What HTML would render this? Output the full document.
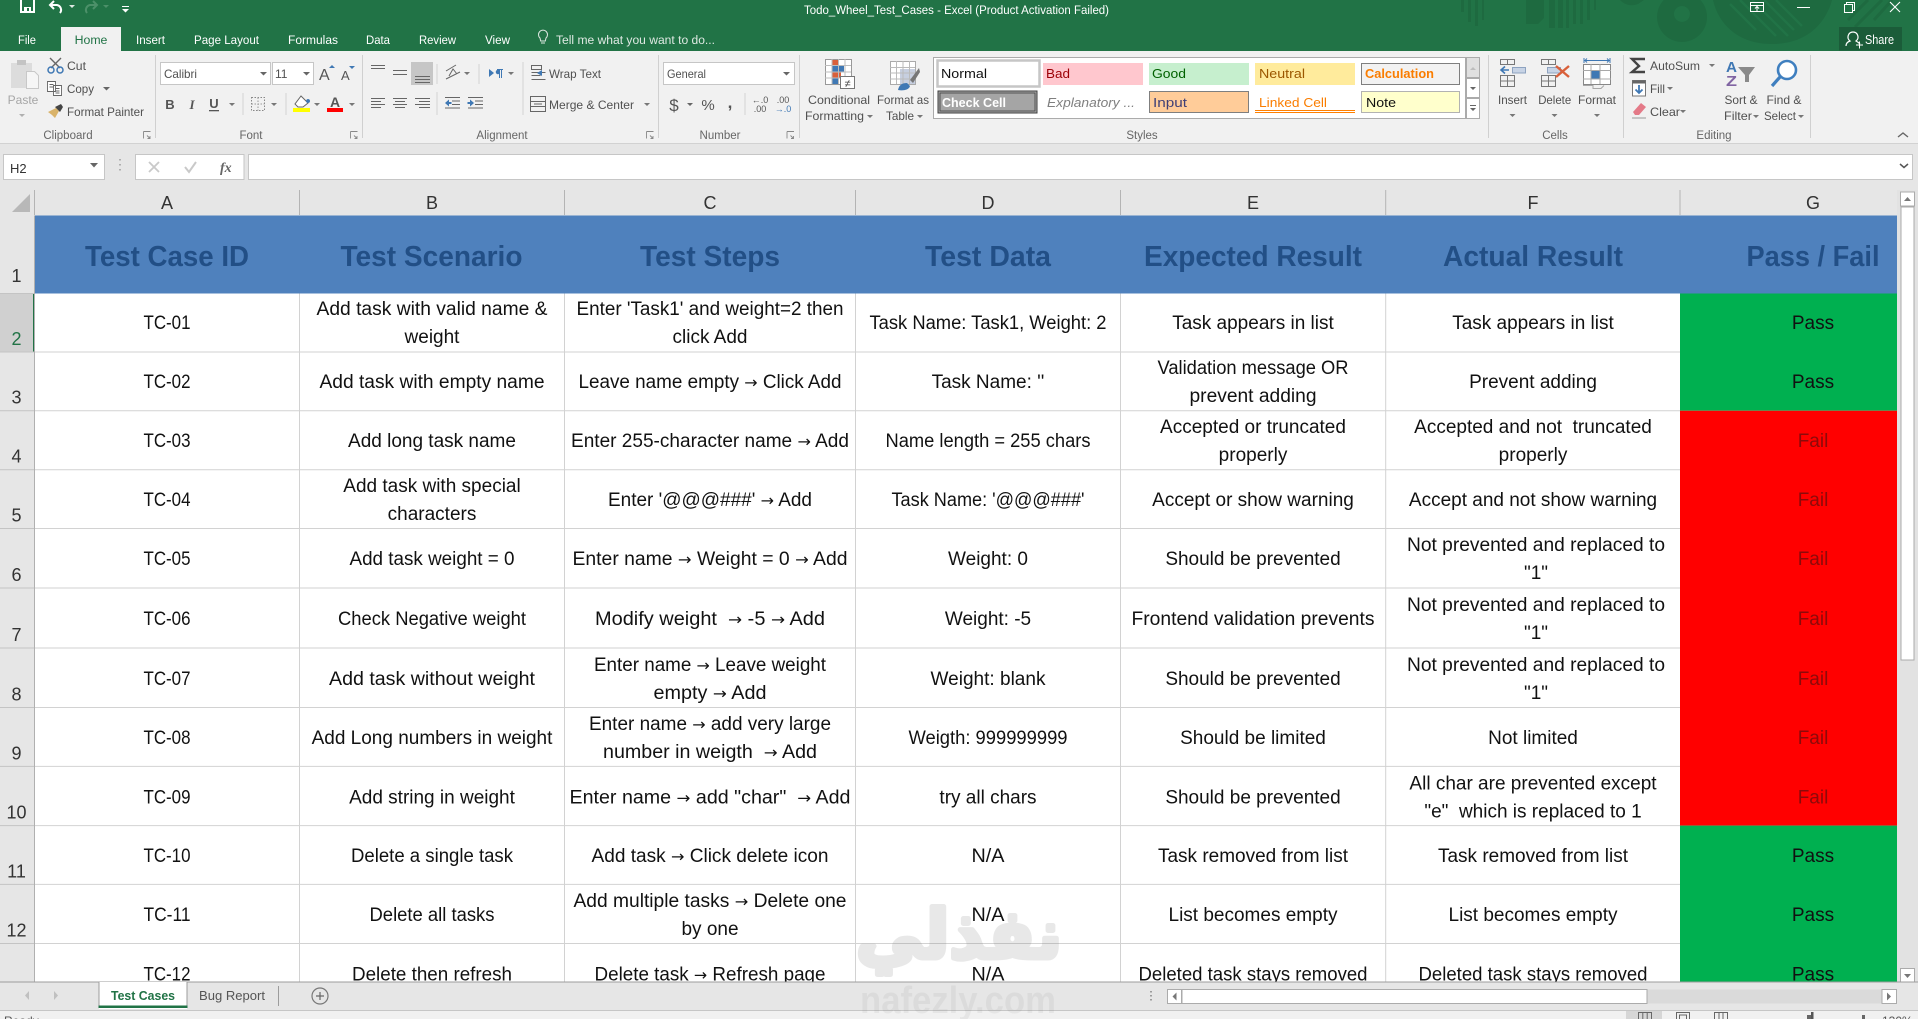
<!DOCTYPE html>
<html lang="en"><head><meta charset="utf-8"><title>Todo_Wheel_Test_Cases - Excel</title>
<style>
html,body{margin:0;padding:0;background:#fff;width:1918px;height:1019px;overflow:hidden}
svg{display:block;position:absolute;left:0;top:0}
text{font-family:"Liberation Sans",sans-serif;white-space:pre}
.r{font-size:12px;fill:#505050}
.m{font-size:12px;fill:#505050;text-anchor:middle}
.l{font-size:11.5px;fill:#666;text-anchor:middle}
.t{font-size:12.3px;fill:#fff}
.c{font-size:19px;fill:#111;text-anchor:middle}
.a{font-family:"DejaVu Sans",sans-serif;font-size:16px}
.h{font-size:29px;font-weight:bold;fill:#224f86;text-anchor:middle}
.n{font-size:18px;fill:#333;text-anchor:middle}
.k{font-size:18px;fill:#333;text-anchor:middle}
.f{fill:#8c0a0a}
.s{font-size:13px}
</style></head><body>
<svg width="1918" height="1019" viewBox="0 0 1918 1019" xmlns="http://www.w3.org/2000/svg">
<rect width="1918" height="1019" fill="#fff"/>

<!-- sheet fills -->
<rect x="34.7" y="215.5" width="1862.3" height="78" fill="#4f81bd"/>
<rect x="1680" y="293.5" width="217" height="117.2" fill="#00b050"/>
<rect x="1680" y="410.7" width="217" height="414.9" fill="#ff0000"/>
<rect x="1680" y="825.6" width="217" height="160" fill="#00b050"/>

<!-- grid -->
<path d="M34.7 352H1680M34.7 410.7H1680M34.7 469.7H1680M34.7 528.5H1680M34.7 588H1680M34.7 648H1680M34.7 707.5H1680M34.7 766.4H1680M34.7 825.6H1680M34.7 884.4H1680M34.7 943.5H1680M299.5 293.5V982M564.5 293.5V982M855.5 293.5V982M1120.5 293.5V982M1385.7 293.5V982" stroke="#d2d2d2" stroke-width="1" fill="none"/>

<!-- header -->
<text class="h" x="167" y="266" textLength="164" lengthAdjust="spacingAndGlyphs">Test Case ID</text>
<text class="h" x="431.5" y="266" textLength="182" lengthAdjust="spacingAndGlyphs">Test Scenario</text>
<text class="h" x="710" y="266" textLength="140" lengthAdjust="spacingAndGlyphs">Test Steps</text>
<text class="h" x="988" y="266" textLength="126" lengthAdjust="spacingAndGlyphs">Test Data</text>
<text class="h" x="1253" y="266" textLength="218" lengthAdjust="spacingAndGlyphs">Expected Result</text>
<text class="h" x="1533" y="266" textLength="180" lengthAdjust="spacingAndGlyphs">Actual Result</text>
<text class="h" x="1813" y="266" textLength="133" lengthAdjust="spacingAndGlyphs">Pass / Fail</text>

<!-- R2 -->
<text class="c" x="167" y="329" textLength="47" lengthAdjust="spacingAndGlyphs">TC-01</text>
<text class="c" x="432" y="315" textLength="231" lengthAdjust="spacingAndGlyphs">Add task with valid name &amp;</text><text class="c" x="432" y="343">weight</text>
<text class="c" x="710" y="315" textLength="267" lengthAdjust="spacingAndGlyphs">Enter 'Task1' and weight=2 then</text><text class="c" x="710" y="343">click Add</text>
<text class="c" x="988" y="329" textLength="237" lengthAdjust="spacingAndGlyphs">Task Name: Task1, Weight: 2</text>
<text class="c" x="1253" y="329">Task appears in list</text>
<text class="c" x="1533" y="329">Task appears in list</text>
<text class="c" x="1813" y="329">Pass</text>
<!-- R3 -->
<text class="c" x="167" y="388" textLength="47" lengthAdjust="spacingAndGlyphs">TC-02</text>
<text class="c" x="432" y="388" textLength="225" lengthAdjust="spacingAndGlyphs">Add task with empty name</text>
<text class="c" x="710" y="388" textLength="263" lengthAdjust="spacingAndGlyphs">Leave name empty <tspan class="a">→</tspan> Click Add</text>
<text class="c" x="988" y="388">Task Name: ''</text>
<text class="c" x="1253" y="374" textLength="191" lengthAdjust="spacingAndGlyphs">Validation message OR</text><text class="c" x="1253" y="402" textLength="127" lengthAdjust="spacingAndGlyphs">prevent adding</text>
<text class="c" x="1533" y="388">Prevent adding</text>
<text class="c" x="1813" y="388">Pass</text>
<!-- R4 -->
<text class="c" x="167" y="447" textLength="47" lengthAdjust="spacingAndGlyphs">TC-03</text>
<text class="c" x="432" y="447">Add long task name</text>
<text class="c" x="710" y="447" textLength="278" lengthAdjust="spacingAndGlyphs">Enter 255-character name <tspan class="a">→</tspan> Add</text>
<text class="c" x="988" y="447" textLength="205" lengthAdjust="spacingAndGlyphs">Name length = 255 chars</text>
<text class="c" x="1253" y="433">Accepted or truncated</text><text class="c" x="1253" y="461">properly</text>
<text class="c" x="1533" y="433">Accepted and not  truncated</text><text class="c" x="1533" y="461">properly</text>
<text class="c f" x="1813" y="447">Fail</text>
<!-- R5 -->
<text class="c" x="167" y="506" textLength="47" lengthAdjust="spacingAndGlyphs">TC-04</text>
<text class="c" x="432" y="492">Add task with special</text><text class="c" x="432" y="520">characters</text>
<text class="c" x="710" y="506" textLength="204" lengthAdjust="spacingAndGlyphs">Enter '@@@###' <tspan class="a">→</tspan> Add</text>
<text class="c" x="988" y="506" textLength="193" lengthAdjust="spacingAndGlyphs">Task Name: '@@@###'</text>
<text class="c" x="1253" y="506">Accept or show warning</text>
<text class="c" x="1533" y="506">Accept and not show warning</text>
<text class="c f" x="1813" y="506">Fail</text>
<!-- R6 -->
<text class="c" x="167" y="565" textLength="47" lengthAdjust="spacingAndGlyphs">TC-05</text>
<text class="c" x="432" y="565" textLength="165" lengthAdjust="spacingAndGlyphs">Add task weight = 0</text>
<text class="c" x="710" y="565" textLength="275" lengthAdjust="spacingAndGlyphs">Enter name <tspan class="a">→</tspan> Weight = 0 <tspan class="a">→</tspan> Add</text>
<text class="c" x="988" y="565">Weight: 0</text>
<text class="c" x="1253" y="565">Should be prevented</text>
<text class="c" x="1536" y="551" textLength="258" lengthAdjust="spacingAndGlyphs">Not prevented and replaced to</text><text class="c" x="1536" y="579">"1"</text>
<text class="c f" x="1813" y="565">Fail</text>
<!-- R7 -->
<text class="c" x="167" y="625" textLength="47" lengthAdjust="spacingAndGlyphs">TC-06</text>
<text class="c" x="432" y="625" textLength="188" lengthAdjust="spacingAndGlyphs">Check Negative weight</text>
<text class="c" x="710" y="625" textLength="230" lengthAdjust="spacingAndGlyphs">Modify weight  <tspan class="a">→</tspan> -5 <tspan class="a">→</tspan> Add</text>
<text class="c" x="988" y="625">Weight: -5</text>
<text class="c" x="1253" y="625" textLength="243" lengthAdjust="spacingAndGlyphs">Frontend validation prevents</text>
<text class="c" x="1536" y="611" textLength="258" lengthAdjust="spacingAndGlyphs">Not prevented and replaced to</text><text class="c" x="1536" y="639">"1"</text>
<text class="c f" x="1813" y="625">Fail</text>
<!-- R8 -->
<text class="c" x="167" y="685" textLength="47" lengthAdjust="spacingAndGlyphs">TC-07</text>
<text class="c" x="432" y="685" textLength="206" lengthAdjust="spacingAndGlyphs">Add task without weight</text>
<text class="c" x="710" y="671" textLength="232" lengthAdjust="spacingAndGlyphs">Enter name <tspan class="a">→</tspan> Leave weight</text><text class="c" x="710" y="699" textLength="113" lengthAdjust="spacingAndGlyphs">empty <tspan class="a">→</tspan> Add</text>
<text class="c" x="988" y="685" textLength="115" lengthAdjust="spacingAndGlyphs">Weight: blank</text>
<text class="c" x="1253" y="685">Should be prevented</text>
<text class="c" x="1536" y="671" textLength="258" lengthAdjust="spacingAndGlyphs">Not prevented and replaced to</text><text class="c" x="1536" y="699">"1"</text>
<text class="c f" x="1813" y="685">Fail</text>
<!-- R9 -->
<text class="c" x="167" y="744" textLength="47" lengthAdjust="spacingAndGlyphs">TC-08</text>
<text class="c" x="432" y="744">Add Long numbers in weight</text>
<text class="c" x="710" y="730" textLength="242" lengthAdjust="spacingAndGlyphs">Enter name <tspan class="a">→</tspan> add very large</text><text class="c" x="710" y="758" textLength="214" lengthAdjust="spacingAndGlyphs">number in weigth  <tspan class="a">→</tspan> Add</text>
<text class="c" x="988" y="744" textLength="159" lengthAdjust="spacingAndGlyphs">Weigth: 999999999</text>
<text class="c" x="1253" y="744">Should be limited</text>
<text class="c" x="1533" y="744">Not limited</text>
<text class="c f" x="1813" y="744">Fail</text>
<!-- R10 -->
<text class="c" x="167" y="803.5" textLength="47" lengthAdjust="spacingAndGlyphs">TC-09</text>
<text class="c" x="432" y="803.5">Add string in weight</text>
<text class="c" x="710" y="803.5" textLength="281" lengthAdjust="spacingAndGlyphs">Enter name <tspan class="a">→</tspan> add "char"  <tspan class="a">→</tspan> Add</text>
<text class="c" x="988" y="803.5">try all chars</text>
<text class="c" x="1253" y="803.5">Should be prevented</text>
<text class="c" x="1533" y="789.5">All char are prevented except</text><text class="c" x="1533" y="817.5">"e"  which is replaced to 1</text>
<text class="c f" x="1813" y="803.5">Fail</text>
<!-- R11 -->
<text class="c" x="167" y="862" textLength="47" lengthAdjust="spacingAndGlyphs">TC-10</text>
<text class="c" x="432" y="862" textLength="162" lengthAdjust="spacingAndGlyphs">Delete a single task</text>
<text class="c" x="710" y="862" textLength="237" lengthAdjust="spacingAndGlyphs">Add task <tspan class="a">→</tspan> Click delete icon</text>
<text class="c" x="988" y="862" textLength="33" lengthAdjust="spacingAndGlyphs">N/A</text>
<text class="c" x="1253" y="862">Task removed from list</text>
<text class="c" x="1533" y="862">Task removed from list</text>
<text class="c" x="1813" y="862">Pass</text>
<!-- R12 -->
<text class="c" x="167" y="921" textLength="47" lengthAdjust="spacingAndGlyphs">TC-11</text>
<text class="c" x="432" y="921" textLength="125" lengthAdjust="spacingAndGlyphs">Delete all tasks</text>
<text class="c" x="710" y="907" textLength="273" lengthAdjust="spacingAndGlyphs">Add multiple tasks <tspan class="a">→</tspan> Delete one</text><text class="c" x="710" y="935">by one</text>
<text class="c" x="988" y="921" textLength="33" lengthAdjust="spacingAndGlyphs">N/A</text>
<text class="c" x="1253" y="921">List becomes empty</text>
<text class="c" x="1533" y="921">List becomes empty</text>
<text class="c" x="1813" y="921">Pass</text>
<!-- R13 -->
<text class="c" x="167" y="980.5" textLength="47" lengthAdjust="spacingAndGlyphs">TC-12</text>
<text class="c" x="432" y="980.5" textLength="160" lengthAdjust="spacingAndGlyphs">Delete then refresh</text>
<text class="c" x="710" y="980.5" textLength="231" lengthAdjust="spacingAndGlyphs">Delete task <tspan class="a">→</tspan> Refresh page</text>
<text class="c" x="988" y="980.5" textLength="33" lengthAdjust="spacingAndGlyphs">N/A</text>
<text class="c" x="1253" y="980.5" textLength="229" lengthAdjust="spacingAndGlyphs">Deleted task stays removed</text>
<text class="c" x="1533" y="980.5" textLength="229" lengthAdjust="spacingAndGlyphs">Deleted task stays removed</text>
<text class="c" x="1813" y="980.5">Pass</text>

<!-- row headers -->
<rect x="0" y="190" width="34.5" height="792" fill="#e6e6e6"/>
<rect x="0" y="293.5" width="34" height="58.5" fill="#d0d0d0"/>
<rect x="33" y="293.5" width="2" height="58.5" fill="#217346"/>
<path d="M0 293.5H34M0 352H34M0 410.7H34M0 469.7H34M0 528.5H34M0 588H34M0 648H34M0 707.5H34M0 766.4H34M0 825.6H34M0 884.4H34M0 943.5H34" stroke="#c4c4c4" fill="none"/>
<rect x="34" y="215" width="1" height="767" fill="#b0b0b0"/>
<text class="n" x="16.5" y="282">1</text>
<text class="n" x="16.5" y="345" style="fill:#217346">2</text>
<text class="n" x="16.5" y="403.5">3</text>
<text class="n" x="16.5" y="462.5">4</text>
<text class="n" x="16.5" y="521.5">5</text>
<text class="n" x="16.5" y="581">6</text>
<text class="n" x="16.5" y="641">7</text>
<text class="n" x="16.5" y="700.5">8</text>
<text class="n" x="16.5" y="759.5">9</text>
<text class="n" x="16.5" y="818.5">10</text>
<text class="n" x="16.5" y="877.5">11</text>
<text class="n" x="16.5" y="936.5">12</text>

<!-- column headers -->
<rect x="0" y="190" width="1897" height="25.5" fill="#e6e6e6"/>
<path d="M34.5 190V215M299.5 190V215M564.5 190V215M855.5 190V215M1120.5 190V215M1385.7 190V215M1680 190V215" stroke="#b4b4b4" fill="none"/>
<path d="M12 212L30 194V212Z" fill="#b8b8b8"/>
<text class="k" x="167" y="209">A</text>
<text class="k" x="432" y="209">B</text>
<text class="k" x="710" y="209">C</text>
<text class="k" x="988" y="209">D</text>
<text class="k" x="1253" y="209">E</text>
<text class="k" x="1533" y="209">F</text>
<text class="k" x="1813" y="209">G</text>

<!-- vertical scrollbar -->
<rect x="1897" y="190" width="21" height="792" fill="#e2e2e2"/>
<rect x="1901" y="207" width="13" height="453" fill="#fff" stroke="#ababab"/>
<rect x="1900.5" y="192" width="14" height="14" fill="#fff" stroke="#ababab"/>
<path d="M1904 201h7l-3.500-4z" fill="#777"/>
<rect x="1900.5" y="968.5" width="14" height="14" fill="#fff" stroke="#ababab"/>
<path d="M1904 974h7l-3.500 4z" fill="#777"/>

<!-- sheet tab bar -->
<rect x="0" y="982" width="1918" height="28.5" fill="#e6e6e6"/>
<rect x="0" y="981.5" width="1918" height="1" fill="#9c9c9c"/>
<rect x="0" y="1010" width="1918" height="9" fill="#f1f1f1"/>
<rect x="0" y="1010" width="1918" height="1" fill="#c6c6c6"/>
<path d="M29 991v9l-4-4.500zM54 991v9l4-4.500z" fill="#c0c0c0"/>
<rect x="99" y="982" width="88" height="27" fill="#fff"/>
<path d="M99 982V1007M187 982V1007" stroke="#9c9c9c" fill="none"/>
<rect x="98.500" y="1005.500" width="89" height="2.500" fill="#217346"/>
<text x="143" y="1000" text-anchor="middle" style="font-size:12.800px;font-weight:bold;fill:#217346" textLength="64" lengthAdjust="spacingAndGlyphs">Test Cases</text>
<text x="232" y="1000" text-anchor="middle" style="font-size:12.500px;fill:#555" textLength="66" lengthAdjust="spacingAndGlyphs">Bug Report</text>
<rect x="278" y="986" width="1" height="20" fill="#9c9c9c"/>
<circle cx="320" cy="996" r="8" fill="none" stroke="#777" stroke-width="1.200"/>
<path d="M316 996h8M320 992v8" stroke="#666" stroke-width="1.200"/>
<path d="M1151 991v1.500M1151 995v1.500M1151 999v1.500" stroke="#8a8a8a" stroke-width="1.600"/>
<rect x="1167.500" y="989.500" width="729" height="14" fill="#dadada"/>
<rect x="1167.500" y="989.500" width="14" height="14" fill="#fff" stroke="#ababab"/>
<rect x="1182" y="989.500" width="465" height="14" fill="#fff" stroke="#ababab"/>
<rect x="1882" y="989.500" width="14.500" height="14" fill="#fff" stroke="#ababab"/>
<path d="M1176.500 992.500v8l-4-4zM1887 992.500v8l4-4z" fill="#777"/>

<!-- status bar -->
<text x="4" y="1025" style="font-size:12px;fill:#555">Ready</text>
<rect x="1626" y="1011" width="36" height="8" fill="#d6d6d6"/>
<path d="M1638.500 1019v-6.500h13v6.500M1642.800 1012.500v6.500M1647.200 1012.500v6.500M1676.500 1019v-6.500h13v6.500M1679.500 1019v-4h7v4M1714.500 1019v-6.500h13v6.500M1719 1012.500v6.500M1723 1012.500v6.500" stroke="#666" fill="none"/>
<rect x="1807" y="1015" width="4" height="4" fill="#666"/><rect x="1811" y="1012" width="2.500" height="7" fill="#555"/>
<rect x="1862" y="1015" width="3" height="4" fill="#666"/>
<text x="1882" y="1025" style="font-size:12px;fill:#555">130%</text>

<!-- watermark -->
<g opacity=".14">
<text x="959" y="958" text-anchor="middle" direction="rtl" style="font-family:'DejaVu Sans',sans-serif;font-size:68px;font-weight:bold;fill:#666;stroke:#666;stroke-width:5px;stroke-linejoin:round" textLength="206" lengthAdjust="spacingAndGlyphs">نفذلي</text>
</g>
<g opacity=".07"><text x="958" y="1013" text-anchor="middle" style="font-size:38px;font-weight:bold;fill:#555" textLength="196" lengthAdjust="spacingAndGlyphs">nafezly.com</text></g>

<!-- formula bar region -->
<rect x="0" y="143" width="1918" height="47" fill="#e6e6e6"/>
<rect x="0" y="143" width="1918" height="1" fill="#d2d2d2"/>
<rect x="3.500" y="154.500" width="101" height="25" fill="#fff" stroke="#c6c6c6"/>
<text x="10" y="173" style="font-size:13px;fill:#333">H2</text>
<path d="M90 163h8l-4 4.500z" fill="#666"/>
<path d="M120 159v1.500M120 164v1.500M120 169v1.500" stroke="#a0a0a0" stroke-width="1.600"/>
<rect x="135.500" y="154.500" width="108.500" height="25" fill="#fff" stroke="#c6c6c6"/>
<path d="M149 162l10 10M159 162l-10 10" stroke="#c9c9c9" stroke-width="1.800"/>
<path d="M185 167l4 5 7-10" stroke="#c9c9c9" stroke-width="2" fill="none"/>
<text x="220" y="172" style="font-family:'Liberation Serif',serif;font-style:italic;font-weight:bold;font-size:14px;fill:#666">fx</text>
<rect x="248.500" y="154.500" width="1664" height="25" fill="#fff" stroke="#c6c6c6"/>
<path d="M1900 164l4 3.500 4-3.500" stroke="#555" stroke-width="1.500" fill="none"/>

<!-- ribbon background -->
<rect x="0" y="51" width="1918" height="92" fill="#f1f1f1"/>

<!-- title bar -->
<rect x="0" y="0" width="1918" height="51" fill="#217346"/>
<!-- pattern -->
<g fill="#1e6a40">
<path d="M1461 0h3v12h-3zM1468 0h3v22h-3zM1475 0h3v26h-3zM1482 0h2v20h-2z"/>
<path d="M1526 0h18v18l-6 6h-12zM1549 0h6v28h-6zM1558 0h5v28h-5zM1566 0h3v28h-3zM1573 0h3v24h-3zM1580 0h3v24h-3zM1587 0h3v20h-3zM1594 0h2v10h-2z"/>
<path d="M1620 0h24l-6 4c-6 2-12 2-18-4z"/>
<path fill-rule="evenodd" d="M1682 -8a25 25 0 1 0 .1 0zM1682 6a8 8 0 1 1 -.1 0z"/>
<path d="M1713 0h119c-6 22-24 44-60 44s-54-22-59-44z"/>
</g>
<g stroke="#217346" stroke-width="2.500" fill="none">
<path d="M1740 0l36 36M1752 0l36 36M1764 0l30 30M1776 0l26 26M1730 4l26 26"/>
</g>
<path d="M1848 20l20-20M1855 27l27-27M1874 20l18-20" stroke="#1e6a40" stroke-width="3" fill="none"/>
<!-- QAT -->
<path d="M21 -1h13v13h-13z" fill="none" stroke="#fff" stroke-width="2"/>
<rect x="24" y="7" width="7" height="5" fill="#fff"/><rect x="27" y="8" width="2" height="3" fill="#217346"/>
<path d="M54 1l-4 4 4 4M50 5h7a5 5 0 0 1 3 8" fill="none" stroke="#fff" stroke-width="2"/>
<path d="M69 5h6l-3 3z" fill="#dfe9e3"/>
<path d="M93 1l4 4-4 4M97 5h-7a5 5 0 0 0-3 8" fill="none" stroke="#4c9069" stroke-width="2"/>
<path d="M103 5h6l-3 3z" fill="#4c9069"/>
<path d="M122 6h7v1h-7zM122 9h7l-3.500 3.500z" fill="#fff"/>
<text x="804" y="14" style="font-size:12.300px;fill:#fff" textLength="305" lengthAdjust="spacingAndGlyphs">Todo_Wheel_Test_Cases - Excel (Product Activation Failed)</text>
<!-- tabs -->
<rect x="61" y="27" width="60" height="24" fill="#f1f1f1"/>
<text class="t" x="18" y="44" textLength="18" lengthAdjust="spacingAndGlyphs">File</text>
<text x="91" y="44" text-anchor="middle" style="font-size:12.300px;fill:#217346">Home</text>
<text class="t" x="136" y="44" textLength="29" lengthAdjust="spacingAndGlyphs">Insert</text>
<text class="t" x="194" y="44" textLength="65" lengthAdjust="spacingAndGlyphs">Page Layout</text>
<text class="t" x="288" y="44" textLength="50" lengthAdjust="spacingAndGlyphs">Formulas</text>
<text class="t" x="366" y="44" textLength="24" lengthAdjust="spacingAndGlyphs">Data</text>
<text class="t" x="419" y="44" textLength="37" lengthAdjust="spacingAndGlyphs">Review</text>
<text class="t" x="485" y="44" textLength="25" lengthAdjust="spacingAndGlyphs">View</text>
<path d="M540 38a4.500 4.500 0 1 1 6 0l-.7 3h-4.600zM541 43h4" fill="none" stroke="#dfe9e3"/>
<text class="t" x="556" y="44" textLength="159" lengthAdjust="spacingAndGlyphs" style="fill:#dfe9e3">Tell me what you want to do...</text>
<!-- window controls -->
<path d="M1750.500 2.500h13v9h-13zM1750.500 5.500h13M1757 11V7M1755 8.500l2-2 2 2" fill="none" stroke="#fff"/>
<path d="M1797 7.500h13" stroke="#fff"/>
<path d="M1844.500 4.500h8v8h-8zM1846.500 4.500v-2h8v8h-2" fill="none" stroke="#fff"/>
<path d="M1890 2l10 10M1900 2l-10 10" stroke="#fff" stroke-width="1.100"/>
<rect x="1839" y="27" width="63" height="23.500" fill="#1b5c39"/>
<path d="M1853 32a5 5 0 0 1 3 9c2 1 3 2 4 3M1853 32a5 5 0 0 0-3 9c-3 1-4 3-4 5" fill="none" stroke="#fff" stroke-width="1.200"/>
<path d="M1856 45h7M1859.500 41.500v7" stroke="#fff"/>
<text x="1865" y="44" style="font-size:12.500px;fill:#fff" textLength="29" lengthAdjust="spacingAndGlyphs">Share</text>

<!-- ribbon seps -->
<path d="M155.500 55V138M362.500 55V138M658.500 55V138M799.500 55V138M1488.500 55V138M1623.500 55V138M1810.500 55V138" stroke="#d0d0d0" fill="none"/>
<path d="M243 93V115M286 93V115M437 64V84M437 92V115M479 64V84M523 62V115M745 93V115" stroke="#d4d4d4" fill="none"/>
<!-- group labels -->
<text class="l" x="68" y="139">Clipboard</text>
<text class="l" x="251" y="139">Font</text>
<text class="l" x="502" y="139">Alignment</text>
<text class="l" x="720" y="139">Number</text>
<text class="l" x="1142" y="139">Styles</text>
<text class="l" x="1555" y="139">Cells</text>
<text class="l" x="1714" y="139">Editing</text>
<path d="M143.500 131.500h7M143.500 131.500v7M147 135.500l3 3M150 136v2.500h-2.500M350.500 131.500h7M350.500 131.500v7M354 135.500l3 3M357 136v2.500h-2.500M646.500 131.500h7M646.500 131.500v7M650 135.500l3 3M653 136v2.500h-2.500M787 131.500h7M787 131.500v7M790.500 135.500l3 3M793.500 136v2.500h-2.500" fill="none" stroke="#888" stroke-width=".9"/>
<path d="M1898 137l5-4 5 4" fill="none" stroke="#666" stroke-width="1.400"/>

<!-- clipboard -->
<rect x="11" y="63" width="21" height="25" fill="#dcdcdc"/>
<rect x="17" y="60" width="9" height="5" fill="#c4c4c4"/>
<path d="M26.500 71.500h8l4 4v13h-12z" fill="#f6f6f6" stroke="#c8c8c8"/>
<text x="23" y="104" text-anchor="middle" style="font-size:12px;fill:#a6a6a6">Paste</text>
<path d="M19 114h6l-3 3z" fill="#b0b0b0"/>
<path d="M50 58l10 10M61 58l-10 10" stroke="#666" stroke-width="1.400"/>
<circle cx="51" cy="70" r="3" fill="none" stroke="#3f78b4" stroke-width="1.500"/>
<circle cx="60" cy="70" r="3" fill="none" stroke="#3f78b4" stroke-width="1.500"/>
<text class="r" x="67" y="70" textLength="19" lengthAdjust="spacingAndGlyphs">Cut</text>
<path d="M47.500 81.500h8v10h-8zM53.500 85.500h8v10h-8zM49.500 84.500h4M49.500 87h4M55.500 88.500h4M55.500 91h4M55.500 93h4" fill="#fff" stroke="#666" stroke-width=".9"/>
<text class="r" x="67" y="93" textLength="27" lengthAdjust="spacingAndGlyphs">Copy</text>
<path d="M103 87h7l-3.500 3.500z" fill="#666"/>
<path d="M48 112l8-4 3 3-4 7-3-3z" fill="#d9b36a"/>
<path d="M55 107l6-3 2 3-3 5z" fill="#444"/>
<text class="r" x="67" y="116" textLength="77" lengthAdjust="spacingAndGlyphs">Format Painter</text>

<!-- font -->
<rect x="160.500" y="62.500" width="110" height="22" fill="#fff" stroke="#c6c6c6"/>
<text class="r" x="164" y="78" style="font-size:12px" textLength="33" lengthAdjust="spacingAndGlyphs">Calibri</text>
<rect x="272.500" y="62.500" width="41" height="22" fill="#fff" stroke="#c6c6c6"/>
<text class="r" x="275" y="78">11</text>
<path d="M260 72h7l-3.500 3.500zM303 72h7l-3.500 3.500z" fill="#666"/>
<text x="319" y="80" style="font-size:16px;fill:#555">A</text>
<path d="M329 68h6l-3-3z" fill="#3f78b4"/>
<text x="341" y="80" style="font-size:13px;fill:#555">A</text>
<path d="M349 66h6l-3 3z" fill="#3f78b4"/>
<text x="170" y="109" text-anchor="middle" style="font-size:13px;font-weight:bold;fill:#555">B</text>
<text x="192" y="109" text-anchor="middle" style="font-size:13px;font-style:italic;font-family:'Liberation Serif',serif;font-weight:bold;fill:#555">I</text>
<text x="214" y="108" text-anchor="middle" style="font-size:13px;font-weight:bold;fill:#555">U</text>
<rect x="209" y="110" width="10" height="1.300" fill="#555"/>
<path d="M229 103h6l-3 3zM271 103h6l-3 3zM314 103h6l-3 3zM349 103h6l-3 3z" fill="#777"/>
<rect x="251.500" y="97.500" width="13" height="13" fill="none" stroke="#888" stroke-dasharray="1.500 1.500"/>
<path d="M258 97.500v13M251.500 104h13" stroke="#999" stroke-dasharray="1.500 1.500"/>
<path d="M301 96l7 7-5 4h-5l-3-3z" fill="#fff" stroke="#666"/>
<path d="M308 103a2 2 0 1 1 .1 0z" fill="#3f78b4"/>
<rect x="293" y="108" width="17" height="4" fill="#ffff00"/>
<text x="335" y="107" text-anchor="middle" style="font-size:14px;font-weight:bold;fill:#555">A</text>
<rect x="327" y="108" width="16" height="4" fill="#ff0000"/>

<!-- alignment -->
<rect x="411" y="62" width="22" height="23" fill="#c6c6c6"/>
<g stroke="#666" stroke-width="1" fill="none">
<path d="M371 65.500h14M371 68.500h14M393 70.500h14M393 74.500h14M415 76.500h15M415 79.500h15M415 82.500h15"/>
<path d="M371 98.500h14M371 101.500h10M371 104.500h14M371 107.500h10M393 98.500h14M395 101.500h10M393 104.500h14M395 107.500h10M415 98.500h15M419 101.500h11M415 104.500h15M419 107.500h11"/>
<path d="M445 97.500h15M452 101h8M452 104.500h8M445 108h15M468 97.500h15M475 101h8M475 104.500h8M468 108h15"/>
<path d="M446 71l10-6M449 76l4-7 4 5M446 79l14-7"/>
<path d="M531.500 65.500h10v4h-10zM531.500 72.500h14M531.500 75.500h9M531.500 79.500h14"/>
<path d="M530.500 96.500h15v15h-15zM530.500 101.500h15M530.500 106.500h15M534 104h8"/>
</g>
<path d="M445 103l4-3.500v2.500h2.500v2h-2.500v2.500zM474 103l-4-3.500v2.500h-2.500v2h2.500v2.500z" fill="#3f78b4"/>
<path d="M489 69v8l5-4zM497 69h6v1h-1v8h-1v-8h-1v8h-1v-4a2 2 0 0 1-2-4z" fill="#3f78b4"/>
<path d="M537 73l5-3v6z" fill="#3f78b4"/>
<path d="M464 72h6l-3 3zM508 72h6l-3 3zM644 103h6l-3 3z" fill="#777"/>
<text class="r" x="549" y="78" textLength="52" lengthAdjust="spacingAndGlyphs">Wrap Text</text>
<text class="r" x="549" y="109" textLength="85" lengthAdjust="spacingAndGlyphs">Merge &amp; Center</text>

<!-- number -->
<rect x="663.500" y="62.500" width="131" height="22" fill="#fff" stroke="#c6c6c6"/>
<text class="r" x="667" y="78" textLength="39" lengthAdjust="spacingAndGlyphs">General</text>
<path d="M783 72h7l-3.500 3.500zM687 103h6l-3 3z" fill="#666"/>
<text x="674" y="111" text-anchor="middle" style="font-size:17px;fill:#555">$</text>
<text x="708" y="110" text-anchor="middle" style="font-size:15px;fill:#555">%</text>
<text x="730" y="108" text-anchor="middle" style="font-size:17px;font-weight:bold;fill:#555">,</text>
<text x="760" y="103" text-anchor="middle" style="font-size:9px;fill:#555">←.0</text>
<text x="760" y="112" text-anchor="middle" style="font-size:9px;fill:#555">.00</text>
<text x="783" y="103" text-anchor="middle" style="font-size:9px;fill:#555">.00</text>
<text x="783" y="112" text-anchor="middle" style="font-size:9px;fill:#3f78b4">→.0</text>

<!-- conditional / table -->
<rect x="825.500" y="59.500" width="26" height="25" fill="#fff" stroke="#999"/>
<rect x="832" y="60" width="6" height="6" fill="#d9603a"/><rect x="832" y="66" width="12" height="6" fill="#3f78b4"/><rect x="832" y="72" width="9" height="6" fill="#d9603a"/><rect x="832" y="78" width="6" height="6" fill="#3f78b4"/>
<path d="M832 59v25M838.500 59v25M845 59v25M825 65.500h26M825 72h26M825 78h26" stroke="#bdbdbd" fill="none"/>
<rect x="840.500" y="76.500" width="14" height="12" fill="#fff" stroke="#777"/>
<text x="847.500" y="87" text-anchor="middle" style="font-size:11px;fill:#444">≠</text>
<text class="r" x="808" y="104" textLength="62" lengthAdjust="spacingAndGlyphs">Conditional</text>
<text class="r" x="805" y="120" textLength="59" lengthAdjust="spacingAndGlyphs">Formatting</text>
<rect x="890.500" y="61.500" width="25" height="23" fill="#fff" stroke="#aaa"/>
<rect x="900" y="69" width="15" height="15" fill="#c7cfe0"/>
<path d="M896.500 61v23M903 61v23M909.500 61v23M890 67.500h25M890 73h25M890 79h25" stroke="#bbb" fill="none"/>
<path d="M919 68l-9 12 3 3 7-11z" fill="#777"/>
<path d="M898 90c1-5 4-7 9-7l3 3c-1 4-7 5-12 4z" fill="#3f78b4"/>
<text class="r" x="877" y="104" textLength="52" lengthAdjust="spacingAndGlyphs">Format as</text>
<text class="r" x="886" y="120" textLength="28" lengthAdjust="spacingAndGlyphs">Table</text>
<path d="M867 115h6l-3 3zM917 115h6l-3 3z" fill="#777"/>

<!-- gallery -->
<rect x="933.500" y="57.500" width="532" height="61" fill="#fff" stroke="#ababab"/>
<rect x="937.500" y="60.500" width="102" height="26" fill="#fff" stroke="#c6c6c6" stroke-width="2.500"/>
<text class="s" x="941" y="78" style="fill:#111" textLength="46" lengthAdjust="spacingAndGlyphs">Normal</text>
<rect x="1043" y="63" width="100" height="22" fill="#ffc7ce"/>
<text class="s" x="1046" y="78" style="fill:#9c0006" textLength="24" lengthAdjust="spacingAndGlyphs">Bad</text>
<rect x="1149" y="63" width="100" height="22" fill="#c6efce"/>
<text class="s" x="1152" y="78" style="fill:#006100" textLength="34" lengthAdjust="spacingAndGlyphs">Good</text>
<rect x="1255" y="63" width="100" height="22" fill="#ffeb9c"/>
<text class="s" x="1259" y="78" style="fill:#9c5700" textLength="46" lengthAdjust="spacingAndGlyphs">Neutral</text>
<rect x="1361.500" y="63.500" width="98" height="21" fill="#f2f2f2" stroke="#7f7f7f"/>
<text class="s" x="1365" y="78" style="fill:#fa7d00;font-weight:bold" textLength="69" lengthAdjust="spacingAndGlyphs">Calculation</text>
<rect x="938" y="91" width="99" height="22" fill="#a5a5a5" stroke="#3f3f3f"/>
<rect x="940" y="93" width="95" height="18" fill="none" stroke="#3f3f3f" stroke-width=".8"/>
<text class="s" x="942" y="107" style="fill:#fff;font-weight:bold" textLength="64" lengthAdjust="spacingAndGlyphs">Check Cell</text>
<text class="s" x="1047" y="107" style="fill:#7f7f7f;font-style:italic" textLength="88" lengthAdjust="spacingAndGlyphs">Explanatory ...</text>
<rect x="1149.500" y="91.500" width="99" height="21" fill="#ffcc99" stroke="#7f7f7f"/>
<text class="s" x="1153" y="107" style="fill:#3f3f76" textLength="34" lengthAdjust="spacingAndGlyphs">Input</text>
<text class="s" x="1259" y="107" style="fill:#fa7d00" textLength="68" lengthAdjust="spacingAndGlyphs">Linked Cell</text>
<path d="M1255 110.500h100M1255 112.500h100" stroke="#ff8001" fill="none"/>
<rect x="1361.500" y="91.500" width="98" height="21" fill="#ffffcc" stroke="#b2b2b2"/>
<text class="s" x="1366" y="107" style="fill:#111" textLength="30" lengthAdjust="spacingAndGlyphs">Note</text>
<rect x="1466.500" y="57.500" width="13" height="20" fill="#e0e0e0" stroke="#ababab"/>
<rect x="1466.500" y="78.500" width="13" height="19" fill="#fff" stroke="#ababab"/>
<rect x="1466.500" y="98.500" width="13" height="20" fill="#fff" stroke="#ababab"/>
<path d="M1470 70h6l-3-3z" fill="#bdbdbd"/>
<path d="M1470 87h6l-3 3zM1470 105h6v1h-6zM1470 108h6l-3 3z" fill="#666"/>

<!-- cells -->
<g fill="none" stroke="#777">
<path d="M1500.500 59.500h14v5h-14zM1507.500 59.500v5M1500.500 75.500h14v11h-14zM1500.500 81h14M1507.500 75.500v11"/>
<path d="M1541.500 59.500h14v5h-14zM1548.500 59.500v5M1541.500 75.500h14v11h-14zM1541.500 81h14M1548.500 75.500v11"/>
</g>
<rect x="1512.500" y="67.500" width="13" height="5.500" fill="#c7d3e5" stroke="#8ea3c0"/>
<path d="M1501 70h8M1505 66.500l-4 3.500 4 3.500" fill="none" stroke="#3f78b4" stroke-width="1.600"/>
<rect x="1547.500" y="67.500" width="13" height="5.500" fill="#c7d3e5" stroke="#8ea3c0"/>
<path d="M1556 66l13 11M1569 66l-13 11" stroke="#d9603a" stroke-width="2.400"/>
<rect x="1583.500" y="64.500" width="27" height="20" fill="#fff" stroke="#888"/>
<rect x="1591" y="70" width="9" height="9" fill="#3f78b4"/>
<path d="M1591 64v20M1600 64v20M1583 70.500h28M1583 79h28M1583 85.500h10v3h8l3-3" stroke="#a8a8a8" fill="none"/>
<path d="M1584 60.500h26M1584 58v5M1610 58v5M1587 58.500l-2 2 2 2M1607 58.500l2 2-2 2" stroke="#3f78b4" fill="none"/>
<text class="m" x="1512.500" y="104" textLength="29" lengthAdjust="spacingAndGlyphs">Insert</text>
<text class="m" x="1554.700" y="104" textLength="33" lengthAdjust="spacingAndGlyphs">Delete</text>
<text class="m" x="1597" y="104" textLength="38" lengthAdjust="spacingAndGlyphs">Format</text>
<path d="M1509.500 114h6l-3 3zM1551.500 114h6l-3 3zM1594 114h6l-3 3z" fill="#777"/>

<!-- editing -->
<path d="M1645 59h-13l7 7-7 6h13" fill="none" stroke="#444" stroke-width="2.400"/>
<text class="r" x="1650" y="70" textLength="50" lengthAdjust="spacingAndGlyphs">AutoSum</text>
<path d="M1709 64h6l-3 3zM1667 87h6l-3 3zM1680 110h6l-3 3zM1753 115h6l-3 3zM1798 115h6l-3 3z" fill="#777"/>
<rect x="1632.500" y="80.500" width="13" height="15.500" fill="#fff" stroke="#777"/>
<rect x="1632.500" y="80.500" width="13" height="3" fill="#666"/>
<path d="M1639 85v8M1635.500 89.500l3.500 3.500 3.500-3.500" fill="none" stroke="#3f78b4" stroke-width="1.800"/>
<text class="r" x="1650" y="93" textLength="15" lengthAdjust="spacingAndGlyphs">Fill</text>
<path d="M1633 112l8-9 5 4-7 8h-4z" fill="#e47a88"/>
<path d="M1632 118h14" stroke="#999"/>
<text class="r" x="1650" y="116" textLength="30" lengthAdjust="spacingAndGlyphs">Clear</text>
<text x="1726" y="72" style="font-size:15px;font-weight:bold;fill:#3f78b4" textLength="11" lengthAdjust="spacingAndGlyphs">A</text>
<text x="1726" y="86" style="font-size:15px;font-weight:bold;fill:#8064a2" textLength="11" lengthAdjust="spacingAndGlyphs">Z</text>
<path d="M1738 67h17l-6 8v7h-4v-7z" fill="#8a8a8a"/>
<circle cx="1787" cy="70" r="9" fill="#fff" stroke="#3f7fbf" stroke-width="2.600"/>
<path d="M1780 77l-8 9" stroke="#3f7fbf" stroke-width="3.200"/>
<text class="m" x="1741" y="104" textLength="33" lengthAdjust="spacingAndGlyphs">Sort &amp;</text>
<text class="r" x="1724" y="120" textLength="28" lengthAdjust="spacingAndGlyphs">Filter</text>
<text class="m" x="1784" y="104" textLength="35" lengthAdjust="spacingAndGlyphs">Find &amp;</text>
<text class="r" x="1764" y="120" textLength="32" lengthAdjust="spacingAndGlyphs">Select</text>
</svg>
</body></html>
